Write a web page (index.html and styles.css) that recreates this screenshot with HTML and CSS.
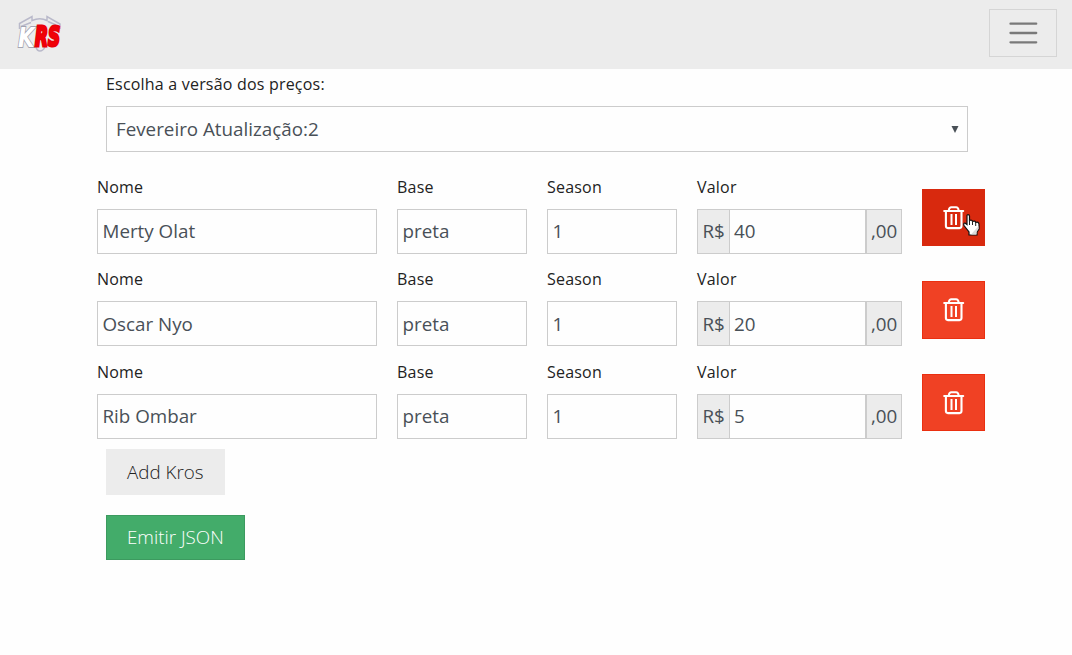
FILE: index.html
```html
<!DOCTYPE html>
<html lang="pt-BR">
<head>
<meta charset="utf-8">
<title>KRS</title>
<link rel="stylesheet" href="styles.css">
</head>
<body>
<svg class="defs" aria-hidden="true">
  <symbol id="trash" viewBox="0 0 22 24">
    <g fill="none" stroke="#fff" stroke-linejoin="round" stroke-linecap="round">
      <path stroke-width="2.1" d="M1.2 5H20.2M2.9 5V20.1Q2.9 22.1 4.9 22.1H16.5Q18.5 22.1 18.5 20.1V5"/>
      <path stroke-width="2" d="M5.8 4.1Q6.3 1.2 8.3 1.2H13.1Q15.1 1.2 15.6 4.1"/>
      <path stroke-width="2" stroke-linecap="butt" d="M8.5 8V19M13 8V19"/>
    </g>
  </symbol>
</svg>
<header class="navbar">
  <a class="brand" aria-label="KRS">
    <svg width="48" height="42" viewBox="0 0 48 42">
      <g fill="none" stroke="#b9b9ca" stroke-width="1.5">
        <path d="M2.5 17V11.5L15 4.5V8.5Q23 5 30 8.5V4.5L43 12V17M4 14.5L14 10.5M31 9.5L39 13"/>
        <path d="M19 35Q20 39 23 39Q26 39 28 35"/>
      </g>
      <text class="logo-text logo-k" x="1" y="34.5" textLength="16.5" lengthAdjust="spacingAndGlyphs">K</text>
      <text class="logo-text logo-rs" x="18" y="33.5" textLength="25" lengthAdjust="spacingAndGlyphs">RS</text>
    </svg>
  </a>
  <button class="toggler" aria-label="Menu">
    <svg width="30" height="30" viewBox="0 0 30 30"><path d="M2.5 5.7H28.2M2.5 15H28.2M2.5 24.3H28.2" stroke="#797979" stroke-width="2.3" stroke-linecap="round"/></svg>
  </button>
</header>
<main>
  <section class="version">
    <label class="label">Escolha a versão dos preços:</label>
    <div class="control select"><span>Fevereiro Atualização:2</span><svg width="8" height="7" viewBox="0 0 8 7"><path d="M.5 0H7.5L4 7Z" fill="#495057"/></svg></div>
  </section>
  <section class="rows">
    <div class="row">
      <div><label class="label">Nome</label><div class="control">Merty Olat</div></div>
      <div><label class="label">Base</label><div class="control">preta</div></div>
      <div><label class="label">Season</label><div class="control">1</div></div>
      <div><label class="label">Valor</label><div class="group"><span class="addon">R$</span><span class="control amount">40</span><span class="addon cents">,00</span></div></div>
      <button class="delete active" aria-label="Excluir"><svg class="trash"><use href="#trash"/></svg>
        <svg class="pointer" width="17" height="22" viewBox="0 0 17 22"><path d="M4 1.5Q4 .7 5 .7Q6.5 .7 6.5 2V6.5Q9 5.5 9.5 7.5Q12 6.3 12.7 8.5Q15.5 7.5 16 10V15L14 18V21H6V18L1 11.5Q0 9 2 9L4 10.5Z" fill="#fff" stroke="#111" stroke-width="1.2"/><path d="M6.5 6V11M9.5 7V11M12.7 8V12" stroke="#222" fill="none"/><path d="M8 20.5L15.5 12V15L13.5 18V20.5Z" fill="#dcdcdc"/></svg>
      </button>
    </div>
    <div class="row">
      <div><label class="label">Nome</label><div class="control">Oscar Nyo</div></div>
      <div><label class="label">Base</label><div class="control">preta</div></div>
      <div><label class="label">Season</label><div class="control">1</div></div>
      <div><label class="label">Valor</label><div class="group"><span class="addon">R$</span><span class="control amount">20</span><span class="addon cents">,00</span></div></div>
      <button class="delete" aria-label="Excluir"><svg class="trash"><use href="#trash"/></svg></button>
    </div>
    <div class="row">
      <div><label class="label">Nome</label><div class="control">Rib Ombar</div></div>
      <div><label class="label">Base</label><div class="control">preta</div></div>
      <div><label class="label">Season</label><div class="control">1</div></div>
      <div><label class="label">Valor</label><div class="group"><span class="addon">R$</span><span class="control amount">5</span><span class="addon cents">,00</span></div></div>
      <button class="delete" aria-label="Excluir"><svg class="trash"><use href="#trash"/></svg></button>
    </div>
  </section>
  <div class="actions">
    <button class="btn add">Add Kros</button>
    <button class="btn emit">Emitir JSON</button>
  </div>
</main>
</body>
</html>
```
FILE: styles.css
```css
* { box-sizing: border-box; }
body {
  margin: 0;
  background: #fefefe;
  color: #222;
  font: 400 16px/24px "Open Sans", sans-serif;
}
button { font-family: inherit; padding: 0; margin: 0; border-radius: 0; }
.defs { position: absolute; width: 0; height: 0; }
.navbar {
  display: flex;
  justify-content: space-between;
  align-items: flex-start;
  height: 69px;
  padding: 9px 15px 0 17px;
  background: #ececec;
}
.brand { display: block; padding-top: 3px; }
.brand svg { display: block; overflow: visible; }
.logo-text { font: italic 700 26px "DejaVu Sans", sans-serif; paint-order: stroke; }
.logo-k { fill: #fff; stroke: #a4a4b2; stroke-width: 1.8px; }
.logo-rs { fill: #f00008; stroke: #e80008; stroke-width: 3px; }
.toggler {
  display: flex;
  align-items: center;
  justify-content: center;
  width: 68px;
  height: 48px;
  background: transparent;
  border: 1px solid #d5d5d5;
}
.label { display: block; height: 24px; margin-bottom: 10px; letter-spacing: .2px; }
.control {
  display: flex;
  align-items: center;
  height: 45.3px;
  padding: 0 5px 0 4.5px;
  border: 1px solid #ccc;
  background: #fefefe;
  color: #495057;
  font-size: 18.8px;
  white-space: nowrap;
}
.version { width: 862px; margin-left: 106px; padding-top: 3px; }
.version .label { line-height: 25px; }
.select { height: 46px; justify-content: space-between; padding: 0 8px 0 9px; }
.rows { margin: 22.6px 0 0 97px; }
.row {
  display: grid;
  grid-template-columns: 280px 130px 130px 205px 63px;
  column-gap: 20px;
  height: 92.5px;
}
.group { display: flex; }
.addon {
  display: flex;
  align-items: center;
  width: 32px;
  padding-left: 4.5px;
  border: 1px solid #ccc;
  border-right: 0;
  background: #ececec;
  color: #495057;
  font-size: 18.8px;
}
.amount { flex: 1; padding-left: 4px; border-right-width: 2px; }
.cents { width: 35px; padding-left: 4px; border-left: 0; border-right: 1px solid #ccc; }
.delete {
  position: relative;
  display: flex;
  align-items: center;
  justify-content: center;
  width: 63px;
  height: 57.5px;
  margin-top: 14.4px;
  background: #f04124;
  border: 1px solid #ea2f10;
}
.delete.active { background: #d8290e; border-color: #d8290e; }
.trash { width: 22px; height: 24px; }
.pointer { position: absolute; left: 40px; top: 24px; }
.actions { display: flex; flex-direction: column; align-items: flex-start; gap: 20px; margin: -3.1px 0 0 106px; }
.btn {
  height: 45.6px;
  padding: 0 20px;
  border: 1px solid #ececec;
  background: #ececec;
  color: #222;
  font-size: 18.8px;
  font-weight: 300;
  line-height: 28px;
}
.btn.emit { background: #43ac6a; border-color: #3c9a5f; color: #fff; }
```
